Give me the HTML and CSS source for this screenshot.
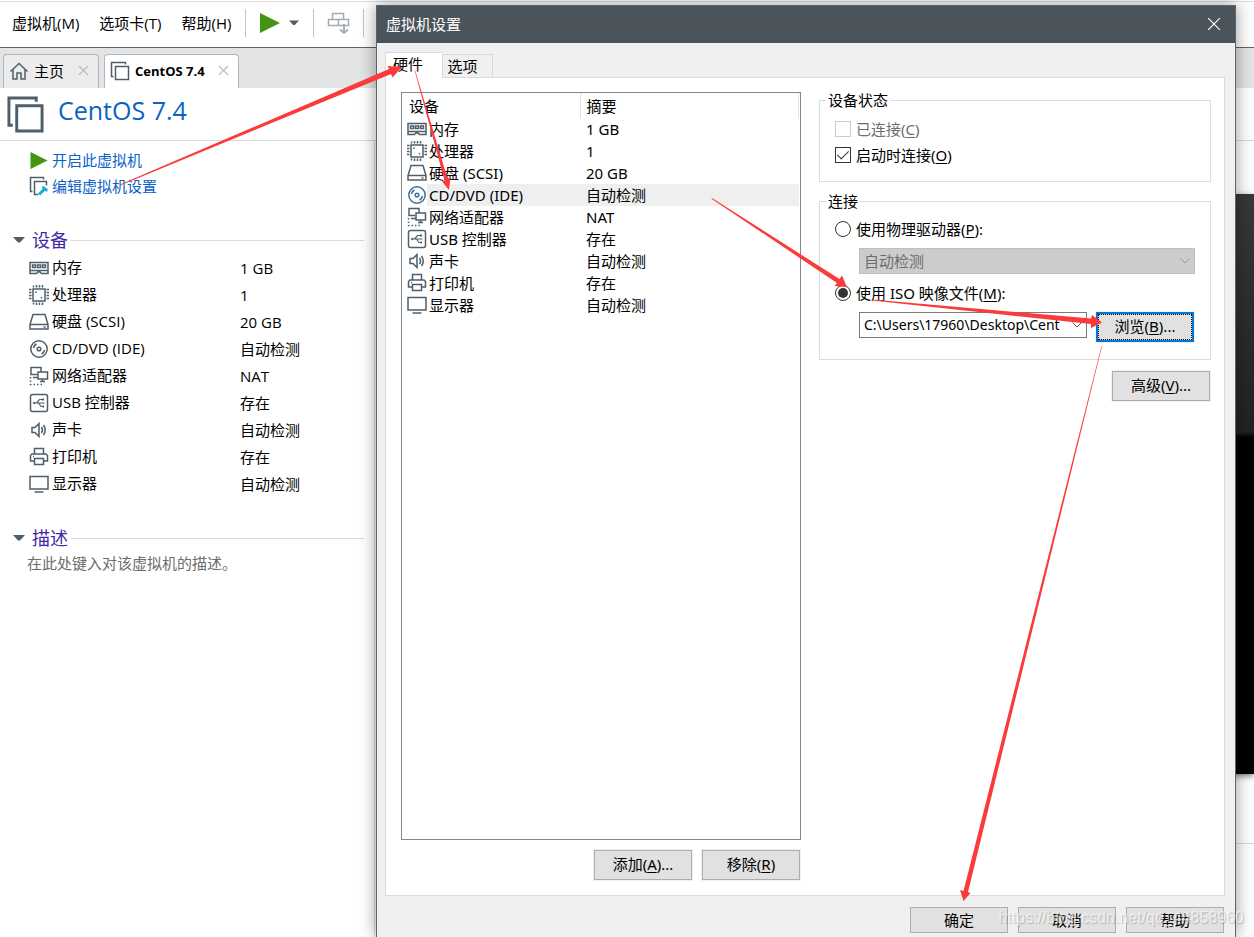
FILE: index.html
```html
<!DOCTYPE html>
<html lang="zh-CN">
<head>
<meta charset="utf-8">
<title>虚拟机设置</title>
<link rel="stylesheet" href="styles.css">
</head>
<body>
<svg class="sprite" aria-hidden="true">
  <symbol id="i-memory" viewBox="0 0 20 20"><path d="M1 4.500h18v11h-6.500l-1.500 -1.500h-2l-1.500 1.500h-6.500zM1 12.500h18"/><path d="M3.500 7h3v2.500h-3zM8.500 7h3v2.500h-3zM13.500 7h3v2.500h-3z"/></symbol>
  <symbol id="i-cpu" viewBox="0 0 20 20"><path d="M4 4h12v12h-12z"/><path d="M4.500 .5v2M7.500 0v2.500M10.500 0v2.500M13.500 0v2.500M4.500 17.500v2M7.500 17.500v2.500M10.500 17.500v2.500M13.500 17.500v2.500M0 4.500h2.500M0 7.500h2.500M0 10.500h2.500M0 13.500h2.500M17.500 4.500h2.500M17.500 7.500h2.500M17.500 10.500h2.500M17.500 13.500h2.500M7 6.500v1.500M12.500 12v1.500"/></symbol>
  <symbol id="i-disk" viewBox="0 0 20 20"><path d="M4 2.500h12l3 10v4.500h-18v-4.500zM1 12.500h18M14.500 15h2"/></symbol>
  <symbol id="i-cd" viewBox="0 0 20 20"><circle cx="10" cy="10" r="8.200"/><circle cx="10" cy="10" r="1.800"/><path d="M4.500 9a5.500 5.500 0 0 1 3 -4M15.500 11a5.500 5.500 0 0 1 -3 4"/></symbol>
  <symbol id="i-net" viewBox="0 0 20 20"><path d="M8 8.500h-6v-7h10v4M4 11.500h5M9 6h9.500v7h-9.500zM11 15.500h5M13.500 13v2"/><path d="M1.500 11v7.500h12" stroke-dasharray="1.500 2"/></symbol>
  <symbol id="i-usb" viewBox="0 0 20 20"><rect x="1.500" y="1.500" width="17" height="17" rx="2"/><path stroke-width="1.200" d="M4.500 10h11M7.500 10l3 -3.500h2.500M9.500 10l2.500 3.500h2"/><path d="M3.500 10l2.500 -1.500v3zM13 5.500h2v2h-2zM13.500 12.500h1.500v2h-1.500z" class="solid"/></symbol>
  <symbol id="i-sound" viewBox="0 0 20 20"><path d="M3 7.500h3l4 -4v13l-4 -4h-3zM12.500 7q2 3 0 6M14.500 5q3.500 5 0 10"/></symbol>
  <symbol id="i-printer" viewBox="0 0 20 20"><path d="M5.500 7v-5.500h9v5.500M5 14h-3.500v-5.500l1.500 -1.500h14l1.500 1.500v5.500h-3.500M5.500 11.500h9v6h-9zM4 9.500h1"/></symbol>
  <symbol id="i-display" viewBox="0 0 20 20"><path d="M1 2.500h18v12.500h-18z"/><path d="M5.500 18h9"/></symbol>
  <symbol id="i-vm" viewBox="0 0 20 20"><path d="M5.500 5.500h13v13h-13zM3.500 15.500h-2v-14h14v2"/></symbol>
  <symbol id="i-play" viewBox="0 0 20 20"><path class="go" d="M0 0l20 10l-20 10z"/></symbol>
  <symbol id="i-caret" viewBox="0 0 12 8"><path class="solid" d="M0 1h12l-5 5.500h-2z"/></symbol>
  <symbol id="i-chevron" viewBox="0 0 12 8"><path d="M1.500 1.500l4.500 4.500l4.500 -4.500"/></symbol>
  <symbol id="i-x" viewBox="0 0 12 12"><path d="M1 1l10 10M11 1l-10 10"/></symbol>
</svg>

<div class="app">
  <nav class="menubar">
    <button class="menu">虚拟机(M)</button>
    <button class="menu">选项卡(T)</button>
    <button class="menu">帮助(H)</button>
    <div class="tools">
      <button class="tool power" aria-label="开启"><svg class="play-big" preserveAspectRatio="none"><use href="#i-play"/></svg><svg class="caret small"><use href="#i-caret"/></svg></button>
      <button class="tool send" aria-label="发送按键"><svg class="keys" viewBox="0 0 24 24"><path d="M5.500 2.500h11v6h-11zM1.500 8.500h10v6h-10zM11.500 8.500h10v6h-10z"/><path class="down" d="M17 13v9M13 18.500l4 3.500l4 -3.500"/></svg></button>
    </div>
  </nav>

  <div class="tabs">
    <div class="tab home"><svg class="icon" viewBox="0 0 20 20"><path d="M1.500 10.500l8.500 -8l8.500 8M4 9v9h4v-6h4v6h4v-9"/></svg><span>主页</span><button class="close" aria-label="关闭主页"><svg><use href="#i-x"/></svg></button></div>
    <div class="tab current"><svg class="icon"><use href="#i-vm"/></svg><span>CentOS 7.4</span><button class="close" aria-label="关闭 CentOS 7.4"><svg><use href="#i-x"/></svg></button></div>
  </div>

  <header class="vm-head"><svg class="vm-icon"><use href="#i-vm"/></svg><h1>CentOS 7.4</h1></header>

  <div class="workspace">
    <aside class="side">
      <div class="links">
        <a href="#start"><svg class="play"><use href="#i-play"/></svg>开启此虚拟机</a>
        <a href="#edit"><svg class="icon" viewBox="0 0 20 20"><path d="M9 18.500h-3.500v-13h12v4M3.500 15.500h-2v-14h13v2"/><path class="wrench" d="M10 18.500l6 -6M14.500 10.500q0 3.500 4 3.500"/></svg>编辑虚拟机设置</a>
      </div>
      <h2><svg class="caret"><use href="#i-caret"/></svg>设备</h2>
      <table class="devices">
        <tr><td><svg class="icon"><use href="#i-memory"/></svg>内存</td><td>1 GB</td></tr>
        <tr><td><svg class="icon"><use href="#i-cpu"/></svg>处理器</td><td>1</td></tr>
        <tr><td><svg class="icon"><use href="#i-disk"/></svg>硬盘 (SCSI)</td><td>20 GB</td></tr>
        <tr><td><svg class="icon"><use href="#i-cd"/></svg>CD/DVD (IDE)</td><td>自动检测</td></tr>
        <tr><td><svg class="icon"><use href="#i-net"/></svg>网络适配器</td><td>NAT</td></tr>
        <tr><td><svg class="icon"><use href="#i-usb"/></svg>USB 控制器</td><td>存在</td></tr>
        <tr><td><svg class="icon"><use href="#i-sound"/></svg>声卡</td><td>自动检测</td></tr>
        <tr><td><svg class="icon"><use href="#i-printer"/></svg>打印机</td><td>存在</td></tr>
        <tr><td><svg class="icon"><use href="#i-display"/></svg>显示器</td><td>自动检测</td></tr>
      </table>
      <h2><svg class="caret"><use href="#i-caret"/></svg>描述</h2>
      <p class="note">在此处键入对该虚拟机的描述。</p>
    </aside>
    <main class="console"><div class="screen"></div><div class="below"></div></main>
  </div>
</div>

<section class="dialog" role="dialog" aria-labelledby="dlg-title">
  <div class="titlebar"><span id="dlg-title">虚拟机设置</span><button class="dismiss" aria-label="关闭"><svg><use href="#i-x"/></svg></button></div>
  <div class="dialog-body">
    <div class="pages" role="tablist"><button class="page on" role="tab" aria-selected="true">硬件</button><button class="page" role="tab" aria-selected="false">选项</button></div>
    <div class="panel">
      <div class="hardware">
        <div class="list">
          <table>
            <thead><tr><th>设备</th><th>摘要</th></tr></thead>
            <tbody>
              <tr><td><div><svg class="icon"><use href="#i-memory"/></svg>内存</div></td><td>1 GB</td></tr>
              <tr><td><div><svg class="icon"><use href="#i-cpu"/></svg>处理器</div></td><td>1</td></tr>
              <tr><td><div><svg class="icon"><use href="#i-disk"/></svg>硬盘 (SCSI)</div></td><td>20 GB</td></tr>
              <tr class="selected"><td><div><svg class="icon"><use href="#i-cd"/></svg>CD/DVD (IDE)</div></td><td>自动检测</td></tr>
              <tr><td><div><svg class="icon"><use href="#i-net"/></svg>网络适配器</div></td><td>NAT</td></tr>
              <tr><td><div><svg class="icon"><use href="#i-usb"/></svg>USB 控制器</div></td><td>存在</td></tr>
              <tr><td><div><svg class="icon"><use href="#i-sound"/></svg>声卡</div></td><td>自动检测</td></tr>
              <tr><td><div><svg class="icon"><use href="#i-printer"/></svg>打印机</div></td><td>存在</td></tr>
              <tr><td><div><svg class="icon"><use href="#i-display"/></svg>显示器</div></td><td>自动检测</td></tr>
            </tbody>
          </table>
        </div>
        <div class="actions"><button class="btn">添加(<u>A</u>)...</button><button class="btn">移除(<u>R</u>)</button></div>
      </div>
      <div class="settings">
        <fieldset class="state">
          <legend>设备状态</legend>
          <label class="off"><input type="checkbox" disabled><span>已连接(<u>C</u>)</span></label>
          <label><input type="checkbox" checked><span>启动时连接(<u>O</u>)</span></label>
        </fieldset>
        <fieldset class="link">
          <legend>连接</legend>
          <label><input type="radio" name="source"><span>使用物理驱动器(<u>P</u>):</span></label>
          <div class="field"><div class="combo off"><select aria-label="物理驱动器" disabled><option>自动检测</option></select><svg><use href="#i-chevron"/></svg></div></div>
          <label><input type="radio" name="source" checked><span>使用 ISO 映像文件(<u>M</u>):</span></label>
          <div class="field"><div class="combo"><select aria-label="ISO 映像文件"><option>C:\Users\17960\Desktop\Cent</option></select><svg><use href="#i-chevron"/></svg></div><button class="btn focus">浏览(<u>B</u>)...</button></div>
        </fieldset>
        <button class="btn advanced">高级(<u>V</u>)...</button>
      </div>
    </div>
    <div class="footer"><button class="btn">确定</button><button class="btn">取消</button><button class="btn">帮助</button></div>
  </div>
</section>

<svg class="arrows" width="1254" height="937" viewBox="0 0 1254 937" aria-hidden="true">
  <path d="M120 184.500L389 69L387.500 66L402 67L392.500 77.500L391 74L120 185.500z"/>
  <path d="M415 70L447.500 178.500L450.500 178L449 190L442 181.500L444.500 180.500L414.500 70z"/>
  <path d="M712 198L839.500 279L842 275.500L847 287L834.500 286L837 283L711.500 198.700z"/>
  <path d="M872 299.500L1091 318.500L1092 315L1102 322.500L1091 328L1091 324L872 300.500z"/>
  <path d="M1102 346L968 892L970.500 893L963.500 901L960 890L963.500 891L1101.500 346z"/>
</svg>
<div class="watermark">https://blog.csdn.net/qq_44858960</div>
</body>
</html>
```
FILE: styles.css
```css
* { box-sizing: border-box; }
html, body { height: 100%; }
body {
  margin: 0;
  position: relative;
  overflow: hidden;
  background: #fff;
  color: #000;
  font: 15px/20px "Open Sans", "Noto Sans CJK SC", sans-serif;
}
button, select, input { font: inherit; color: inherit; margin: 0; }
button { border: 0; padding: 0; background: none; }
svg { fill: none; stroke: #4e5f6b; stroke-width: 1.5; flex: none; }
.sprite { position: absolute; width: 0; height: 0; }
.solid { fill: #4e5f6b; stroke: none; }
.go { fill: #449510; stroke: none; }
.icon { width: 20px; height: 20px; }
.caret { width: 12px; height: 8px; }
table { border-collapse: collapse; table-layout: fixed; width: 100%; }
td, th { padding: 0; text-align: left; font-weight: normal; white-space: nowrap; }
h1, h2, p { margin: 0; font-weight: normal; }

.app { min-height: 100%; display: flex; flex-direction: column; }
.menubar {
  display: flex;
  align-items: center;
  gap: 20px;
  height: 48px;
  padding: 0 12px 2px;
  border-bottom: 1px solid #606266;
  box-shadow: inset 0 1px #fff, inset 0 2px #dcdcdc;
}
.menu { font-size: 15px; }
.tools { display: flex; height: 28px; margin-left: -6px; }
.tool { display: flex; align-items: center; border-left: 1px solid #c4c4c4; padding: 0 14px; }
.tools::after { content: ""; border-left: 1px solid #c4c4c4; }
.power { gap: 9px; width: 68px; }
.send { width: 50px; padding: 0 13px; }
.play-big { width: 20px; height: 20px; }
.small { width: 10px; }
.keys { width: 24px; height: 24px; stroke: #a4aaae; }
.down { stroke: #a2b0b8; stroke-width: 2; }

.tabs { display: flex; gap: 5px; height: 40px; padding: 6px 3px 0; background: #e3e4e6; }
.tab {
  display: flex;
  align-items: center;
  gap: 5px;
  padding: 0 8px 2px 5px;
  border: 1px solid #b5b5b5;
  border-bottom: 0;
  border-radius: 4px 4px 0 0;
}
.home { width: 96px; background: #ececee; }
.current { width: 135px; background: #fff; font-weight: bold; font-size: 13px; }
.tab .close { margin-left: auto; width: 12px; height: 12px; display: flex; }
.close svg { width: 11px; height: 11px; stroke: #c0c0c0; }

.vm-head { display: flex; align-items: center; gap: 13px; height: 53px; padding: 0 6px; border-bottom: 1px solid #dadada; }
.vm-icon { width: 39px; height: 39px; }
.vm-head h1 { font-size: 25px; line-height: 32px; color: #0b62c6; padding-bottom: 8px; }

.workspace { flex: 1; display: flex; }
.side { width: 375px; padding: 6px 10px 0 13px; border-right: 1px solid #dadada; }
.links { padding-left: 16px; }
.links a { display: flex; align-items: center; gap: 3px; height: 26px; color: #0b62c6; text-decoration: none; }
.play { width: 20px; height: 17px; }
.wrench { stroke: #18aed0; stroke-width: 3; }
.side h2 { display: flex; align-items: center; gap: 7px; margin-top: 27px; height: 28px; font-size: 18px; color: #4127a5; }
.side h2::after { content: ""; flex: 1; height: 1px; margin-left: -4px; background: #dadada; }
.devices { margin-left: 16px; width: 335px; }
.devices tr { height: 27px; }
.devices td:first-child { width: 211px; }
.devices .icon { vertical-align: middle; margin-right: 3px; }
.note { padding: 1px 0 0 14px; color: #6d6d6d; }
.console { flex: 1; display: flex; flex-direction: column; margin-left: 1px; padding-top: 53px; overflow: hidden; }
.screen { flex: 1; background: linear-gradient(#383838, #222 41%, #000 42%); box-shadow: 0 2px 6px #777; }
.below { height: 163px; background: linear-gradient(#dadada, #dadada) 0 69px / 100% 1px no-repeat; }

.dialog {
  position: absolute;
  top: 5px;
  right: 18px;
  bottom: 0;
  left: 376px;
  display: flex;
  flex-direction: column;
  background: #f0f0f0;
  border: 1px solid #5d666b;
  border-bottom: 0;
  box-shadow: 0 0 16px rgba(0, 0, 0, .4);
  font-family: "Noto Sans", "Noto Sans CJK SC", sans-serif;
}
.titlebar { display: flex; align-items: center; justify-content: space-between; height: 37px; padding: 0 14px 2px 9px; background: #4c545b; color: #fff; }
.dismiss, .dismiss svg { display: block; width: 14px; height: 14px; stroke: #fff; stroke-width: 1; }
.dialog-body { flex: 1; display: flex; flex-direction: column; padding: 9px 10px 4px 8px; }
.pages { display: flex; align-items: flex-end; height: 26px; margin-bottom: -1px; }
.page { width: 51px; height: 24px; padding-right: 10px; border: 1px solid #dadada; background: #f0f0f0; }
.page.on { width: 57px; height: 26px; padding: 0 12px 4px 0; border-right: 0; border-bottom: 0; background: #fff; position: relative; }
.panel { flex: 1; display: flex; gap: 18px; padding: 14px 13px 15px 15px; border: 1px solid #dadada; background: #fff; }
.hardware { width: 400px; display: flex; flex-direction: column; gap: 10px; }
.list { flex: 1; border: 1px solid #828790; padding-right: 1px; }
.list tr { height: 22px; }
.list thead tr { height: 25px; }
.list th { border-right: 1px solid #e2e2e2; padding-left: 7px; }
.list th:first-child { width: 178px; }
.list th:last-child { padding-left: 6px; }
.list td:first-child { padding-left: 5px; }
.list td:last-child { padding-left: 6px; }
.list td div { display: flex; align-items: center; gap: 2px; }
.selected { background: linear-gradient(#efefef, #efefef) 25px 0 no-repeat; }
.list .selected .icon { stroke: #3c6f9c; }
.actions { display: flex; justify-content: flex-end; gap: 10px; padding-right: 1px; }
.btn { width: 98px; height: 30px; padding-bottom: 2px; border: 1px solid #adadad; background: #e1e1e1; box-shadow: 0 0 0 1px #f0f0f0; }
.focus { margin-right: 1px; border: 2px solid #0078d7; outline: 1px dotted #000; outline-offset: -3px; }
u { text-underline-offset: 2px; }

.settings { flex: 1; min-width: 0; display: flex; flex-direction: column; margin-top: -2px; }
fieldset { min-width: 0; margin: 0; border: 1px solid #dcdcdc; padding: 0 15px; }
legend { padding: 0 2px; margin-left: -9px; }
.state { height: 92px; padding-top: 6px; margin-bottom: 9px; }
.link { height: 169px; padding-top: 5px; margin-bottom: 11px; }
label { display: flex; align-items: center; gap: 5px; height: 26px; }
.off { color: #6d6d6d; }
input { appearance: none; width: 16px; height: 16px; border: 1px solid #333; background: #fff; display: grid; place-items: center; }
input:disabled { border-color: #ccc; }
input[type=checkbox]:checked::after { content: ""; width: 5px; height: 10px; border: solid #333; border-width: 0 1px 1px 0; rotate: 45deg; margin-top: -3px; }
input[type=radio] { border-radius: 50%; }
input[type=radio]:checked::after { content: ""; width: 10px; height: 10px; border-radius: 50%; background: #333; }
.field { display: flex; align-items: flex-start; gap: 9px; padding-left: 24px; margin: 6px 0; }
.combo { position: relative; flex: 1; min-width: 0; }
.combo select { display: block; appearance: none; width: 100%; height: 26px; padding: 0 20px 0 4px; border: 1px solid #7a7a7a; border-radius: 0; background: #fff; font-size: 14px; }
.combo.off select { background: #ccc; border-color: #bfbfbf; color: #6d6d6d; opacity: 1; font-size: 15px; }
.combo svg { position: absolute; right: 4px; top: 9px; width: 12px; height: 8px; stroke: #555; stroke-width: 1; }
.combo.off svg { stroke: #999; }
.advanced { align-self: flex-end; margin-right: 1px; }
.footer { display: flex; justify-content: flex-end; gap: 10px; padding: 11px 1px 0; }
.footer .btn { height: 26px; padding: 0; }

.arrows { position: absolute; left: 0; top: 0; z-index: 1; fill: #fb3a3a; stroke: none; pointer-events: none; }
.watermark { position: absolute; right: 10px; bottom: 9px; font: 16px/20px "Liberation Sans", sans-serif; color: rgba(255, 255, 255, .65); text-shadow: 1px 1px 1px rgba(0, 0, 0, .2); pointer-events: none; }
```
